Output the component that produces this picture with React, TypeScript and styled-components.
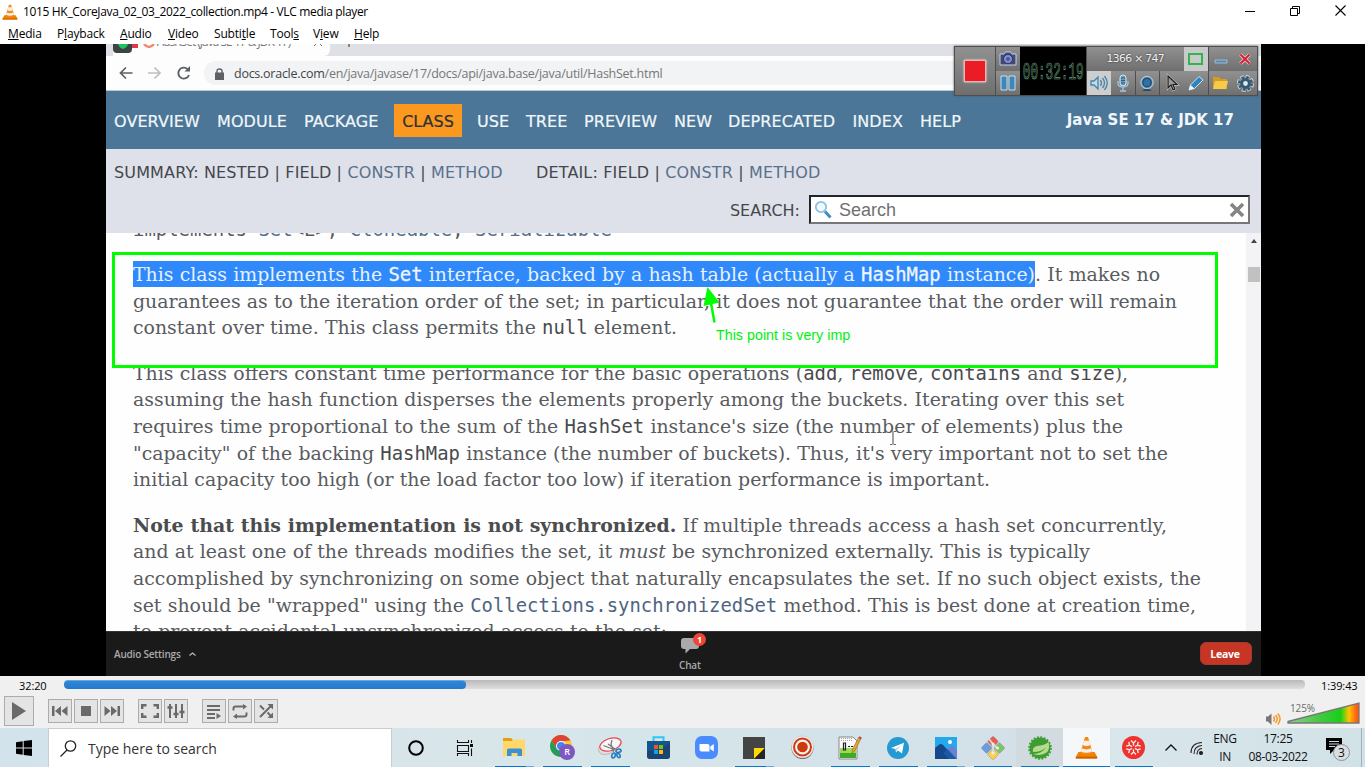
import React from "react";
import styled, { createGlobalStyle } from "styled-components";

const Global = createGlobalStyle`
  * { box-sizing: border-box; }
  html, body { margin: 0; padding: 0; background: #000; overflow: hidden; }
  svg { display: block; flex: none; overflow: visible; }
`;

const ui = `"Open Sans", "Noto Sans", sans-serif`;
const sans = `"DejaVu Sans", sans-serif`;
const serif = `"DejaVu Serif", serif`;
const mono = `"DejaVu Sans Mono", monospace`;

const Screen = styled.div`
  width: 1365px; height: 767px; display: flex; flex-direction: column; overflow: hidden;
  font-family: ${ui}; font-size: 12px; color: #000; background: #fff;
`;

/* ---------- window chrome ---------- */
const TitleBar = styled.header`
  height: 24px; display: flex; align-items: center; padding-left: 2px; background: #fff; flex: none;
`;
const Title = styled.span`
  margin-left: 5px; white-space: nowrap; line-height: 16px; flex: 1; letter-spacing: -0.34px;
`;
const WindowButtons = styled.div`
  display: flex; gap: 35px; padding: 0 19px 3px 0; align-items: center;
`;
const MenuBar = styled.nav`
  height: 20px; display: flex; padding-left: 8px; background: #fff; line-height: 20px; flex: none; letter-spacing: -0.18px;
  u { text-underline-offset: 1px; }
`;
const MenuItem = styled.span<{ $w: number }>`
  width: ${p => p.$w}px; white-space: nowrap;
`;

/* ---------- video ---------- */
const Video = styled.main`
  height: 632px; background: #000; padding: 0 104px 0 106px; flex: none;
`;
const Frame = styled.div`
  position: relative; width: 1155px; height: 632px; display: flex; flex-direction: column; overflow: hidden; background: #fefefe;
`;
const TabStrip = styled.div`
  height: 12px; display: flex; background: #dfe0e6; overflow: hidden; flex: none;
`;
const ActiveTab = styled.div`
  width: 217px; margin-left: 7px; background: #fdfdfe; display: flex; align-items: flex-start; border-bottom-right-radius: 6px;
`;
const SharedBadge = styled.div`
  width: 19px; height: 9px; background: #3d4245; border-radius: 0 0 4px 4px; display: flex; justify-content: center;
`;
const TabTitle = styled.span`
  font: 12px/16px ${ui}; margin: -10px 0 0 2px; color: #777; white-space: nowrap; letter-spacing: -1px; width: 158px;
`;
const RestTabs = styled.div`
  flex: 1; border-radius: 0 0 0 7px; background: #dfe0e6; padding-left: 16px;
`;
const AddressRow = styled.div`
  height: 35px; display: flex; align-items: center; background: #fdfdfe; padding-left: 13px; border-bottom: 1px solid #b8c9d6; flex: none;
`;
const NavIcons = styled.div`
  display: flex; gap: 15px; width: 85px; align-items: center;
`;
const UrlPill = styled.div`
  flex: 1; height: 24px; border-radius: 12px 0 0 12px; background: #f1f3f4; display: flex; align-items: center; padding: 1px 0 0 11px;
  font: 12.5px/20px ${ui}; color: #777; white-space: nowrap;
  b { font-weight: 500; color: #444; }
`;
const Url = styled.span`
  margin-left: 10px; letter-spacing: -0.26px;
`;
const TopNav = styled.div`
  height: 58px; background: #4b7698; display: flex; align-items: center; padding: 3px 0 0 8px; font: 16px/20px ${sans}; color: #f1f6fa; flex: none;
  -webkit-text-stroke: 0.2px #f1f6fa;
`;
const NavItem = styled.span<{ $w: number }>`
  width: ${p => p.$w}px; white-space: nowrap; letter-spacing: 0.08px;
`;
const NavActive = styled.span`
  width: 68px; height: 33px; line-height: 35px; margin-right: 15px; background: #fb981f; color: #2c3036; text-align: center; margin-top: -3px;
  -webkit-text-stroke: 0.2px #2c3036;
`;
const Brand = styled.span`
  font: bold 15px/20px ${sans}; margin: -3px 0 0 auto; padding-right: 27px; white-space: nowrap; -webkit-text-stroke: 0;
`;
const SubNav = styled.div`
  height: 84px; background: #dee1ea; display: flex; flex-direction: column; font: 16px/20px ${sans}; color: #44474b; flex: none;
`;
const SubRow = styled.div`
  display: flex; padding: 14px 0 0 8px; height: 46px; white-space: nowrap; letter-spacing: 0.15px;
`;
const SubGroup = styled.span<{ $w: number }>`
  width: ${p => p.$w}px; a { color: #5a708b; }
`;
const SearchRow = styled.div`
  display: flex; justify-content: flex-end; align-items: center; padding-right: 11px; height: 29px; 
`;
const SearchLabel = styled.span`
  margin: 2px 9px 0 0;
`;
const SearchBox = styled.div`
  width: 441px; height: 29px; background: #fff; border: 2px solid #777; border-top-color: #24242c; border-left-color: #24242c;
  display: flex; align-items: center; padding: 0 3px; font: 18px/24px "Liberation Sans", sans-serif; color: #707070;
  span { flex: 1; margin-left: 7px; }
`;
const Doc = styled.section`
  height: 398px; display: flex; overflow: hidden; background: #fefefe; flex: none;
`;
const DocText = styled.article`
  flex: 1; padding-left: 27px; font: 18.9px/26.6px ${serif}; color: #595b5e; margin-top: -17px;
`;
const Implements = styled.div`
  font: 18.96px/26.6px ${mono}; margin-bottom: 18.5px; white-space: pre; a { color: #566f8c; }
`;
const Para = styled.div`
  margin-bottom: 19px;
`;
const Line = styled.div<{ $w: number }>`
  width: ${p => p.$w}px; height: 26.6px; white-space: nowrap; text-align: justify; text-align-last: justify;
  code { font: 18.9px/20px ${mono}; color: #484a4d; }
  code.link { color: #4f6480; }
  b { color: #4a4c4e; }
`;
const Mark = styled.span`
  background: #2f89fb; color: #e6f1fd; display: inline-block; height: 26px; line-height: 26.6px; width: 902px;
  && code { color: #eef5fe; -webkit-text-stroke: 0.3px #eef5fe; }
`;
const Scrollbar = styled.div`
  width: 15px; background: #f3f2f4; display: flex; flex-direction: column; align-items: center; padding-top: 6px; gap: 24px;
`;
const Thumb = styled.div`
  width: 12px; height: 15px; background: #c1c1c2;
`;
const MeetingBar = styled.footer`
  height: 45px; background: #1a1a1a; border-top: 1px solid #333; display: flex; align-items: center; padding: 0 9px 1px 8px; color: #aaa; flex: none;
`;
const AudioSettings = styled.div`
  width: 565px; display: flex; gap: 8px; align-items: center; font: 600 10px/14px ${ui}; letter-spacing: -0.2px;
`;
const Chat = styled.div`
  position: relative; display: flex; flex-direction: column; gap: 5px; width: 40px; font: 600 10px/12px ${ui}; letter-spacing: -0.2px; padding-top: 2px;
  svg { margin-left: 2px; }
`;
const Badge = styled.span`
  position: absolute; left: 14px; top: -3px; width: 13px; height: 13px; border-radius: 7px; background: #ee4636; color: #fff; font: bold 9px/13px ${ui}; text-align: center;
`;
const Leave = styled.button`
  margin-left: auto; width: 52px; height: 23px; padding: 0 2px 0 0; border: 1px solid #a53a31; border-radius: 6px; background: #c73525; color: #fff; font: bold 10.5px/18px ${ui}; letter-spacing: -0.25px;
`;

/* ---------- recorder overlay ---------- */
const Recorder = styled.div`
  position: absolute; left: 848px; top: 2px; width: 304px; height: 50px; display: grid; background: #4e4e4e; padding: 1px;
  grid-template-columns: 40px 24px 66px repeat(7, 1fr); grid-template-rows: 1fr 1fr; gap: 0.6px; box-shadow: 0 0 2px #555;
`;
const RecCell = styled.div<{ $tone?: string; $col?: string; $row?: string }>`
  background: ${p => p.$tone ?? "linear-gradient(#919191, #6f6f6f)"}; grid-column: ${p => p.$col ?? "auto"}; grid-row: ${p => p.$row ?? "auto"};
  display: flex; align-items: center; justify-content: center; color: #f0f0f0; font: 10.8px/14px ${sans}; letter-spacing: -0.65px; white-space: nowrap; text-shadow: 0 0 2px #222;
  overflow: hidden;
`;
const StopSquare = styled.div`
  width: 22px; height: 22px; background: #ea1c26; border: 1px solid #f6b2b2; box-shadow: 0 0 2px #fff;
`;
const Timer = styled.span`
  font: 23px/24px "Liberation Mono", monospace; letter-spacing: 0; color: #0a120c; -webkit-text-stroke: 0.7px #6ea582; transform: scaleX(0.55); text-shadow: none; padding-top: 3px;
`;

/* ---------- drawn annotations ---------- */
const HighlightBox = styled.div`
  position: absolute; left: 6px; top: 208px; width: 1106px; height: 116px; border: 3px solid #00fd00;
`;
const Arrow = styled.svg`
  position: absolute; left: 594px; top: 242px;
`;
const Note = styled.span`
  position: absolute; left: 610px; top: 282px; font: 14.3px/18px "Liberation Sans", sans-serif; color: #00f010; white-space: nowrap;
`;
const TextCursor = styled.svg`
  position: absolute; left: 783px; top: 386px;
`;

/* ---------- player controls ---------- */
const Controls = styled.section`
  height: 52px; background: #f0f0f0; display: flex; flex-direction: column; flex: none;
`;
const SeekRow = styled.div`
  height: 20px; display: flex; align-items: center; padding: 0 6px 0 19px; font: 11px/14px ${ui};
`;
const Time = styled.span<{ $w: number }>`
  width: ${p => p.$w}px; white-space: nowrap; letter-spacing: -0.1px;
`;
const Track = styled.div`
  flex: 1; height: 9px; border-radius: 4px; background: linear-gradient(#b9b9b9, #dedede); margin: -3px 16px 0 0; overflow: hidden;
`;
const Played = styled.div`
  width: 402px; height: 9px; border-radius: 4px; background: linear-gradient(#2f86d8, #2479cc); border-top: 1px solid #6ba4d8;
`;
const ButtonRow = styled.div`
  display: flex; align-items: center; padding: 0 5px 0 4px; height: 30px; 
`;
const ButtonGroup = styled.div`
  display: flex; gap: 2px; margin-right: 14px;
`;
const PlayerButton = styled.button<{ $big?: boolean }>`
  width: ${p => (p.$big ? 30 : 24)}px; height: ${p => (p.$big ? 30 : 24)}px; padding: 0; border: 1px solid #acacac; background: #e4e4e4;
  display: flex; align-items: center; justify-content: center;
`;
const Volume = styled.div`
  margin-left: auto; display: flex; align-items: flex-end; gap: 6px; position: relative; height: 28px;
`;
const VolumeLabel = styled.span`
  position: absolute; left: 24px; top: 5px; font: 10px/12px ${ui}; color: #6c6c6c; letter-spacing: -0.1px;
`;

/* ---------- taskbar ---------- */
const Taskbar = styled.footer`
  height: 39px; display: flex; background: linear-gradient(90deg, #d3e3ec, #d8e6ea 35%, #d5e6ea 45%, #d3e0e8 75%, #d9e6ec 82%, #d1e2e7); flex: none;
`;
const StartCell = styled.div`
  width: 48px; display: flex; align-items: center; justify-content: center; flex: none;
`;
const TaskSearch = styled.div`
  width: 344px; flex: none; background: #fff; border: 1px solid #c9cdcf; border-bottom: 0; display: flex; align-items: center; padding-left: 11px; gap: 11px;
  font: 14px/20px ${ui}; color: #333; padding-top: 1px;
`;
const TaskApp = styled.div<{ $w?: number; $run?: "one" | "multi"; $active?: boolean; $tint?: string }>`
  width: ${p => p.$w ?? 48}px; flex: none; display: flex; align-items: center; justify-content: center; position: relative;
  background: ${p => (p.$active ? "#f5f8fa" : p.$tint ?? "none")};
  &::after {
    content: ""; position: absolute; bottom: 0; height: 1px; left: ${p => (p.$active ? 0 : 5)}px; right: ${p => (p.$active ? 0 : 4)}px;
    background: ${p => (p.$run === "multi" ? "linear-gradient(90deg, #0078d7 80%, #66a9dd 80%)" : p.$run ? "#0078d7" : "transparent")};
  }
`;
const Tray = styled.div`
  flex: 1; display: flex; align-items: center; padding-left: 8px; font: 12px/18px ${ui}; color: #111;
`;
const WifiSlot = styled.div`
  margin-left: 13px;
`;
const TrayText = styled.div<{ $w: number }>`
  width: ${p => p.$w}px; text-align: center; white-space: nowrap; letter-spacing: -0.35px;
`;
const Notifications = styled.div`
  position: relative; margin-left: 16px; width: 34px; height: 20px;
`;
const NotifCount = styled.span`
  position: absolute; left: 7px; top: 6px; width: 17px; height: 17px; border-radius: 9px; border: 1px solid #8b9296; background: #d9dfe2; font: 12px/15px ${ui}; text-align: center;
`;
const DesktopEdge = styled.div`
  width: 1px; height: 39px; background: #9fb0ba; margin-left: auto; margin-right: 3px;
`;

const Cone = ({ s = 16 }: { s?: number }) => (
  <svg width={s} height={s} viewBox="0 0 20 20">
    <path d="M3 14h14l2.500 4.500q.3 1-.8 1H1.300q-1.100 0-.8-1z" fill="#f08000" />
    <path d="M1 18h18l.3 1.500H.7z" fill="#c86000" />
    <path d="M8.700.8h2.600L15.500 15q-5.500 3-11 0z" fill="#f58a12" />
    <path d="M7.700 4.200h4.600l1.100 3.700q-3.400 1.500-6.800 0zM5.800 10.700q4.200 2 8.400 0l.8 2.700q-5 2.500-10 0z" fill="#f3f1ee" />
  </svg>
);

const g = "#6a6a6a";

const WindowIcons = () => (
  <WindowButtons>
    <svg width="10" height="10"><path d="M0 5.500h10" stroke="#000" /></svg>
    <svg width="10" height="10" fill="none" stroke="#000"><path d="M.5 2.500h7v7h-7zM2.500 2V.5h7v7H8" /></svg>
    <svg width="11" height="11" stroke="#000" strokeWidth="1.100"><path d="M.5 .5l10 10M10.500 .5l-10 10" /></svg>
  </WindowButtons>
);

const Folder = ({ w = 22 }: { w?: number }) => (
  <svg width={w} height={w * 0.82} viewBox="0 0 22 18">
    <path d="M0 0h8l1.500 1.500V5H0z" fill="#e0a010" />
    <path d="M0 3h9l2-1.500h11V18H0z" fill="#ffd76a" />
    <path d="M4 18v-6q0-1.500 1.500-1.500h12Q19 10.500 19 12v6h-4.500v-3h-6v3z" fill="#3a91d4" />
  </svg>
);

const Chrome = () => (
  <svg width="25" height="25" viewBox="0 0 25 25">
    <circle cx="11" cy="11" r="11" fill="#fcc934" />
    <path d="M1.500 5.500A11 11 0 0 1 20.500 5.500L11 6.200 6.500 13.600z" fill="#db4437" />
    <path d="M1.500 5.500A11 11 0 0 0 11 22l4.500-8.500-8.700.300z" fill="#1e9e58" />
    <circle cx="11" cy="11" r="5" fill="#fff" /><circle cx="11" cy="11" r="4" fill="#4285f4" />
    <circle cx="17" cy="17" r="8" fill="#7e57c2" />
    <text x="17" y="20.200" fontSize="9" fontFamily="Open Sans, sans-serif" fontWeight="600" fill="#fff" textAnchor="middle">R</text>
  </svg>
);

const Snip = () => (
  <svg width="24" height="22" viewBox="0 0 24 22" fill="none">
    <path d="M1.500 9q-3 8 5 8.500 5 0 8-3" stroke="#e3a3a5" />
    <ellipse cx="12.500" cy="7.500" rx="11" ry="6" transform="rotate(-18 12.500 7.500)" fill="#f4f6f7" stroke="#e5474c" strokeWidth="1.200" />
    <path d="M5.500 8.500L17 13M14 3l-1 4 2.500 8M10 7l7 5" stroke="#777" strokeWidth="1.200" />
    <g stroke="#2b80bd" strokeWidth="1.700"><ellipse cx="20.500" cy="13.800" rx="2.600" ry="1.600" transform="rotate(-15 20.500 13.800)" /><ellipse cx="15.500" cy="18.500" rx="1.700" ry="2.500" transform="rotate(15 15.500 18.500)" /><ellipse cx="20.500" cy="18.500" rx="1.500" ry="2.200" transform="rotate(-25 20.500 18.500)" /></g>
  </svg>
);

const Store = () => (
  <svg width="23" height="23" viewBox="0 0 23 23">
    <path d="M6.500 6V1.200h10V6" fill="none" stroke="#32c5f4" strokeWidth="2" />
    <path d="M0 5h23v15q0 3-3 3H3q-3 0-3-3z" fill="#14558e" />
    <path d="M0 15q12 0 23-8v13q0 3-3 3H3q-3 0-3-3z" fill="#203d68" opacity=".7" />
    <path d="M7 9h4v4H7z" fill="#f35325" /><path d="M12 9h4v4h-4z" fill="#81bc06" /><path d="M7 14h4v4H7z" fill="#05a6f0" /><path d="M12 14h4v4h-4z" fill="#ffba08" />
  </svg>
);

const ZoomIcon = () => (
  <svg width="23" height="23" viewBox="0 0 23 23">
    <rect width="23" height="23" rx="7" fill="#4a8cff" />
    <path d="M4.500 8h8q2 0 2 2v5.500h-8q-2 0-2-2zM15.300 10.500l3.500-2.500v7.500l-3.500-2.500z" fill="#fff" />
  </svg>
);

const Sticky = () => (
  <svg width="22" height="22"><path d="M0 0h22v22H0z" fill="#444" /><path d="M11 11h11L11 22z" fill="#ffd900" /><path d="M22 11v11H11z" fill="#252525" /></svg>
);

const RecordIcon = () => (
  <svg width="23" height="23" viewBox="0 0 23 23">
    <circle cx="11.500" cy="12" r="11" fill="#6b4a42" />
    <circle cx="11.500" cy="11" r="11" fill="#f7f3f1" stroke="#c9bdb8" strokeWidth=".6" /><circle cx="11.500" cy="11" r="8.500" fill="none" stroke="#c93c16" strokeWidth="2" /><circle cx="11.500" cy="11" r="5.300" fill="#cf3a0d" />
  </svg>
);

const Notepad = () => (
  <svg width="24" height="24" viewBox="0 0 24 24">
    <path d="M1 1h14l4 4v18H1z" fill="#fafafa" stroke="#888" /><path d="M2 12h16v10H2z" fill="#9ada55" /><path d="M2 17h16v5H2z" fill="#3eaa25" />
    <path d="M3 2.500h11M3 4.500h11" stroke="#aaa" strokeDasharray="1 1" />
    <path d="M5.500 7h2v7h-2zM10 10.500h2M13 10.500h2" stroke="#222" strokeWidth="1.200" fill="none" />
    <path d="M14 17l.5-4L21 1l2.200 1.300L17 14.500z" fill="#e7a32c" stroke="#9c671c" strokeWidth=".6" /><path d="M20.500 2l1-1.700 2.200 1.300-1 1.700z" fill="#b54952" />
  </svg>
);

const Telegram = () => (
  <svg width="22" height="22" viewBox="0 0 22 22"><circle cx="11" cy="11" r="11" fill="#2499d2" /><path d="M4 11L17 5.800 15 16.500l-4-3-2 2-.5-3.500z" fill="#fff" /><path d="M8.500 12L14 8.500 9.800 13 9 15.500z" fill="#a9cfe5" /></svg>
);

const Photos = () => (
  <svg width="22" height="22" viewBox="0 0 22 22"><path d="M0 0h22v22H0z" fill="#23a9ec" /><path d="M10 14l6-5q1-.5 2 .5l4 4.500v8H10z" fill="#6f7fcf" /><path d="M0 11l5-4q1.500-.5 3 1l13 14H0z" fill="#15498c" /><path d="M8 16l5-4 9 10H14z" fill="#1d62ad" opacity=".7" /><circle cx="15" cy="5" r="2" fill="#fff" /></svg>
);

const Git = () => (
  <svg width="24" height="24" viewBox="0 0 24 24">
    <g transform="rotate(45 12 12)" stroke="#8a8f93" strokeWidth=".5"><rect x="3.500" y="3.500" width="8" height="8" rx="1.500" fill="#ed5a50" /><rect x="12.500" y="3.500" width="8" height="8" rx="1.500" fill="#7fc45e" /><rect x="3.500" y="12.500" width="8" height="8" rx="1.500" fill="#6a9de0" /><rect x="12.500" y="12.500" width="8" height="8" rx="1.500" fill="#fbd04a" /></g>
    <path d="M8 3l4 5v9M12 8l4 4" stroke="#d7dde0" strokeWidth="1.800" fill="none" /><circle cx="12" cy="8" r="1.600" fill="#e9eef0" /><circle cx="12" cy="17" r="1.600" fill="#e9eef0" /><circle cx="16.500" cy="12" r="1.600" fill="#e9eef0" />
  </svg>
);

const Spring = () => (
  <svg width="24" height="24" viewBox="0 0 24 24">
    <circle cx="12" cy="12" r="10.500" fill="#3f9c35" /><circle cx="12" cy="12" r="10.800" fill="none" stroke="#3f9c35" strokeWidth="2" strokeDasharray="1.900 1.493" />
    <path d="M20.500 6q2 7-2 10.500-5 4-13.500 1.500 9-.5 13-6.500-5 4.500-13 4.500Q4 11 9 10q8-.5 11.500-4z" fill="#b5dc8c" />
  </svg>
);

const RedKnot = () => (
  <svg width="23" height="23" viewBox="0 0 23 23"><circle cx="11.500" cy="11.500" r="11.500" fill="#ee332e" />
    {[0, 60, 120, 180, 240, 300].map(a => <path key={a} transform={`rotate(${a} 11.500 11.500)`} d="M11.500 9.800V7M9 4.500L11.500 7 14 4.500" stroke="#fbe9e6" strokeWidth="1.300" fill="none" />)}
  </svg>
);

export default function App() {
  return (
    <Screen>
      <Global />
      <TitleBar>
        <Cone s={16} />
        <Title>1015 HK_CoreJava_02_03_2022_collection.mp4 - VLC media player</Title>
        <WindowIcons />
      </TitleBar>
      <MenuBar>
        <MenuItem $w={49}><u>M</u>edia</MenuItem>
        <MenuItem $w={63}>P<u>l</u>ayback</MenuItem>
        <MenuItem $w={48}><u>A</u>udio</MenuItem>
        <MenuItem $w={46}><u>V</u>ideo</MenuItem>
        <MenuItem $w={56}>Subti<u>t</u>le</MenuItem>
        <MenuItem $w={43}>Tool<u>s</u></MenuItem>
        <MenuItem $w={41}>V<u>i</u>ew</MenuItem>
        <MenuItem $w={40}><u>H</u>elp</MenuItem>
      </MenuBar>

      <Video>
        <Frame>
          <TabStrip>
            <ActiveTab>
              <SharedBadge><svg width="10" height="6"><path d="M0 0h10q-1 4-5 5-4-1-5-5z" fill="#1ec45c" /></svg></SharedBadge>
              <svg width="22" height="6"><path d="M0 0h6v4H0z" fill="#dc3a44" /><path d="M12 0q5 6 10 0" fill="none" stroke="#f0876a" strokeWidth="2.500" /></svg>
              <TabTitle>HashSet (Java SE 17 &amp; JDK 17)</TabTitle>
              <svg width="8" height="3"><path d="M0 2l2-2M8 2L6 0" stroke="#777" /></svg>
            </ActiveTab>
            <RestTabs><svg width="6" height="4"><path d="M3 0v3" stroke="#666" strokeWidth="1.500" /></svg></RestTabs>
          </TabStrip>
          <AddressRow>
            <NavIcons>
              <svg width="14" height="14" fill="none" stroke="#5c6064" strokeWidth="1.700"><path d="M13.500 7H2M7 1.500L1.500 7 7 12.500" /></svg>
              <svg width="14" height="14" fill="none" stroke="#bdbfc2" strokeWidth="1.700"><path d="M0 7h12M6.500 1.500L12 7l-5.500 5.500" /></svg>
              <svg width="14" height="14" fill="none" stroke="#5c6064" strokeWidth="1.900"><path d="M12 9A5.500 5.500 0 1 1 10.500 3" /><path d="M13 0v5.500H7.500z" fill="#5c6064" stroke="none" /></svg>
            </NavIcons>
            <UrlPill>
              <svg width="9" height="12"><path d="M0 4.500h9V12H0z" fill="#5c6064" /><path d="M2 5V3q0-2 2.500-2T7 3v2" fill="none" stroke="#5c6064" strokeWidth="1.400" /></svg>
              <Url><b>docs.oracle.com</b>/en/java/javase/17/docs/api/java.base/java/util/HashSet.html</Url>
            </UrlPill>
          </AddressRow>
          <TopNav>
            <NavItem $w={103}>OVERVIEW</NavItem>
            <NavItem $w={87}>MODULE</NavItem>
            <NavItem $w={90}>PACKAGE</NavItem>
            <NavActive>CLASS</NavActive>
            <NavItem $w={49}>USE</NavItem>
            <NavItem $w={58}>TREE</NavItem>
            <NavItem $w={90}>PREVIEW</NavItem>
            <NavItem $w={54}>NEW</NavItem>
            <NavItem $w={124.5}>DEPRECATED</NavItem>
            <NavItem $w={67.5}>INDEX</NavItem>
            <NavItem $w={45}>HELP</NavItem>
            <Brand>Java SE 17 &amp; JDK 17</Brand>
          </TopNav>
          <SubNav>
            <SubRow>
              <SubGroup $w={422}>SUMMARY: NESTED | FIELD | <a>CONSTR</a> | <a>METHOD</a></SubGroup>
              <SubGroup $w={300}>DETAIL: FIELD | <a>CONSTR</a> | <a>METHOD</a></SubGroup>
            </SubRow>
            <SearchRow>
              <SearchLabel>SEARCH:</SearchLabel>
              <SearchBox>
                <svg width="18" height="19" fill="none"><circle cx="7" cy="7" r="5.200" stroke="#8ac2de" strokeWidth="1.800" fill="#eef8fd" /><path d="M11 11.500l5.500 6" stroke="#3c8fc0" strokeWidth="3" /></svg>
                <span>Search</span>
                <svg width="16" height="16"><path d="M2 2l12 12M14 2L2 14" stroke="#858585" strokeWidth="3.600" /></svg>
              </SearchBox>
            </SearchRow>
          </SubNav>
          <Doc>
            <DocText>
              <Implements>implements <a>Set</a>&lt;E&gt;, <a>Cloneable</a>, <a>Serializable</a></Implements>
              <Para>
                <Line $w={1027}><Mark>This class implements the <code>Set</code> interface, backed by a hash table (actually a <code>HashMap</code> instance)</Mark>. It makes no</Line>
                <Line $w={1044}>guarantees as to the iteration order of the set; in particular, it does not guarantee that the order will remain</Line>
                <Line $w={544}>constant over time. This class permits the <code>null</code> element.</Line>
              </Para>
              <Para>
                <Line $w={995}>This class offers constant time performance for the basic operations (<code>add</code>, <code>remove</code>, <code>contains</code> and <code>size</code>),</Line>
                <Line $w={991}>assuming the hash function disperses the elements properly among the buckets. Iterating over this set</Line>
                <Line $w={990}>requires time proportional to the sum of the <code>HashSet</code> instance's size (the number of elements) plus the</Line>
                <Line $w={1035}>"capacity" of the backing <code>HashMap</code> instance (the number of buckets). Thus, it's very important not to set the</Line>
                <Line $w={857}>initial capacity too high (or the load factor too low) if iteration performance is important.</Line>
              </Para>
              <Para>
                <Line $w={1034}><b>Note that this implementation is not synchronized.</b> If multiple threads access a hash set concurrently,</Line>
                <Line $w={957}>and at least one of the threads modifies the set, it <i>must</i> be synchronized externally. This is typically</Line>
                <Line $w={1068}>accomplished by synchronizing on some object that naturally encapsulates the set. If no such object exists, the</Line>
                <Line $w={1063}>set should be "wrapped" using the <code className="link">Collections.synchronizedSet</code> method. This is best done at creation time,</Line>
                <Line $w={534}>to prevent accidental unsynchronized access to the set:</Line>
              </Para>
            </DocText>
            <Scrollbar>
              <svg width="6" height="4"><path d="M0 4l3-4 3 4z" fill="#444" /></svg>
              <Thumb />
            </Scrollbar>
          </Doc>
          <MeetingBar>
            <AudioSettings>Audio Settings <svg width="7" height="4"><path d="M.5 3.500L3.500 1l3 2.500" stroke="#bbb" fill="none" strokeWidth="1.200" /></svg></AudioSettings>
            <Chat>
              <svg width="18" height="16"><path d="M3 0h12q3 0 3 3v5q0 3-3 3H9l-4.500 4.500V11H3Q0 11 0 8V3q0-3 3-3z" fill="#aaa" /></svg>
              Chat
              <Badge>1</Badge>
            </Chat>
            <Leave>Leave</Leave>
          </MeetingBar>

          <Recorder>
            <RecCell $row="1 / 3" $col="1"><StopSquare /></RecCell>
            <RecCell $row="1" $col="2"><svg width="18" height="15"><path d="M1 3h4l1.500-2h5L13 3h4v11H1z" fill="#424b78" stroke="#c8cce0" /><circle cx="9" cy="8" r="4.500" fill="#8793c8" stroke="#2c3566" /><circle cx="9" cy="8" r="2" fill="#4656a4" /></svg></RecCell>
            <RecCell $row="2" $col="2"><svg width="16" height="16"><path d="M1 1h6v14H1zM9 1h6v14H9z" fill="#3c88be" stroke="#c9dce8" /></svg></RecCell>
            <RecCell $row="1 / 3" $col="3" $tone="#000"><Timer>00:32:19</Timer></RecCell>
            <RecCell $row="1" $col="4 / 8">1366 × 747</RecCell>
            <RecCell $row="1" $col="8" $tone="#c9cbca"><svg width="16" height="12"><path d="M1 1h13v10H1z" fill="none" stroke="#32b551" strokeWidth="2" /></svg></RecCell>
            <RecCell $row="1" $col="9"><svg width="14" height="12"><path d="M1 7h12v3H1z" fill="#4a8dbb" stroke="#c0d4e0" strokeWidth=".7" /></svg></RecCell>
            <RecCell $row="1" $col="10"><svg width="12" height="12"><path d="M1.500 1.500l9 9M10.500 1.500l-9 9" stroke="#f1c9c9" strokeWidth="3.500" /><path d="M1.500 1.500l9 9M10.500 1.500l-9 9" stroke="#cf2436" strokeWidth="2" /></svg></RecCell>
            <RecCell $row="2" $col="4" $tone="#cdcfcf"><svg width="18" height="16" fill="none" stroke="#4583aa" strokeWidth="1.300"><path d="M1 6h3l4-4v12l-4-4H1z" fill="#c4dae8" /><path d="M10.500 5q2 3 0 6M12.500 3q4 5 0 10M14.500 1q5.500 7 0 14" /></svg></RecCell>
            <RecCell $row="2" $col="5"><svg width="14" height="18" fill="none"><rect x="4" y="1" width="6" height="11" rx="3" fill="#6c9aba" stroke="#d3e5f0" /><path d="M5 4h4M5 6.500h4M5 9h4" stroke="#2d5f84" /><path d="M2 7v2q0 4 5 4t5-4V7M7 13v4M4 17h6" stroke="#a6c6da" strokeWidth="1.300" /></svg></RecCell>
            <RecCell $row="2" $col="6"><svg width="16" height="17"><path d="M3 16q5-5 10 0z" fill="#284967" /><circle cx="8" cy="7.500" r="6.200" fill="#6f9dbc" stroke="#c9dae6" strokeWidth=".8" /><circle cx="8" cy="7.500" r="4.200" fill="#2f72a4" stroke="#1f4f75" strokeWidth="1.400" /></svg></RecCell>
            <RecCell $row="2" $col="7"><svg width="12" height="16"><path d="M2 1v12l3-3 2 5 2-1-2-4.500h4z" fill="#9a9a9a" stroke="#ddd" strokeWidth="2.200" /><path d="M2 1v12l3-3 2 5 2-1-2-4.500h4z" fill="#9a9a9a" stroke="#1c1c1c" strokeWidth="1.200" /></svg></RecCell>
            <RecCell $row="2" $col="8"><svg width="18" height="17"><path d="M2 15l1.500-5L12 1.500 16 5 7.500 13.500z" fill="#2a87bd" stroke="#d0e5f2" /><path d="M2 15l1.500-5L7.500 13.500z" fill="#edf4f8" /></svg></RecCell>
            <RecCell $row="2" $col="9"><svg width="17" height="14"><path d="M1 1h6l1.500 2H15v10H1z" fill="#d69b20" /><path d="M3 5h13l-2 8H1z" fill="#f7ca48" /></svg></RecCell>
            <RecCell $row="2" $col="10"><svg width="17" height="17"><circle cx="8.500" cy="8.500" r="6.600" fill="none" stroke="#cbd9e2" strokeWidth="4" strokeDasharray="3.400 1.784" /><circle cx="8.500" cy="8.500" r="6.200" fill="none" stroke="#365a73" strokeWidth="2.800" strokeDasharray="2.500 2.370" /><circle cx="8.500" cy="8.500" r="3.900" fill="#dfeaf1" stroke="#365a73" strokeWidth="3" /></svg></RecCell>
          </Recorder>

          <HighlightBox />
          <Arrow width="24" height="40"><path d="M7.500 1l12 15.500L3.500 20z" fill="#00fd00" /><path d="M11 17l3.500 19.500" stroke="#00fd00" strokeWidth="2.500" /></Arrow>
          <Note>This point is very imp</Note>
          <TextCursor width="8" height="16"><path d="M1 1.500h2.500M4.500 1.500H7M4 2v12M1 14.500h2.500M4.500 14.500H7" stroke="#666" strokeWidth="1.200" /></TextCursor>
        </Frame>
      </Video>

      <Controls>
        <SeekRow>
          <Time $w={45}>32:20</Time>
          <Track><Played /></Track>
          <Time $w={38}>1:39:43</Time>
        </SeekRow>
        <ButtonRow>
          <ButtonGroup><PlayerButton $big><svg width="16" height="18"><path d="M1 0l14 9-14 9z" fill={g} /></svg></PlayerButton></ButtonGroup>
          <ButtonGroup>
            <PlayerButton><svg width="16" height="12" fill={g}><path d="M0 1h2.500v10H0zM9 1v10L3 6zM15.500 1v10l-6-5z" /></svg></PlayerButton>
            <PlayerButton><svg width="10" height="10"><path d="M0 0h10v10H0z" fill={g} /></svg></PlayerButton>
            <PlayerButton><svg width="16" height="12" fill={g}><path d="M13.500 1H16v10h-2.500zM7 1v10l6-5zM.5 1v10l6-5z" /></svg></PlayerButton>
          </ButtonGroup>
          <ButtonGroup>
            <PlayerButton><svg width="18" height="14" fill="none" stroke={g} strokeWidth="2.400"><path d="M5.500 1.200H1.200V5M12.500 1.200h4.300V5M1.200 9v3.800h4.300M16.800 9v3.800h-4.300" /></svg></PlayerButton>
            <PlayerButton><svg width="18" height="14" stroke={g} strokeWidth="2"><path d="M3 0v14M9 0v14M15 0v14" /><path d="M.5 3.500h5M6.500 10h5M12.500 8h5" strokeWidth="2.400" /></svg></PlayerButton>
          </ButtonGroup>
          <ButtonGroup>
            <PlayerButton><svg width="16" height="15" fill="none" stroke={g} strokeWidth="2"><path d="M1 2h13M1 6h13M1 10h8M1 14h8" /><path d="M10.500 9l4.500 3-4.500 3z" fill={g} stroke="none" /></svg></PlayerButton>
            <PlayerButton><svg width="16" height="15" fill="none" stroke={g} strokeWidth="2"><path d="M1.500 6.500v-2q0-2 2-2H12M14.500 8.500v2q0 2-2 2H4" /><path d="M11 0l4 2.500L11 5.500zM5 9.500l-4 3L5 15z" fill={g} stroke="none" /></svg></PlayerButton>
            <PlayerButton><svg width="14" height="14" fill="none" stroke={g} strokeWidth="2"><path d="M1 13L12 2M1 1.500l4 4M8.500 8.500L12 12" /><path d="M8.500 0H14v5.500zM14 8.500V14H8.500z" fill={g} stroke="none" /></svg></PlayerButton>
          </ButtonGroup>
          <Volume>
            <svg width="15" height="12"><path d="M0 3.500h2l3.500-3V12L2 8.500H0z" fill="#777" /><path d="M7.500 3.500q2 2.500 0 5M9.500 2q3.500 4 0 8M11.800 .5q4.500 5.500 0 11" fill="none" stroke="#f7941e" strokeWidth="1.400" /></svg>
            <svg width="73" height="22">
              <defs><linearGradient id="vol"><stop offset="0" stopColor="#8fcf8f" /><stop offset=".45" stopColor="#42c942" /><stop offset=".74" stopColor="#18d018" /><stop offset=".86" stopColor="#ffc400" /><stop offset=".97" stopColor="#ff5a12" /></linearGradient></defs>
              <path d="M1 18.500L72 0v20H1z" fill="url(#vol)" stroke="#777" strokeWidth="1.300" />
            </svg>
            <VolumeLabel>125%</VolumeLabel>
          </Volume>
        </ButtonRow>
      </Controls>

      <Taskbar>
        <StartCell><svg width="16" height="16"><path d="M0 2.200l6.700-1v6.300H0zM7.700 1L16 0v7.500H7.700zM0 8.500h6.700v6.300l-6.700-1zM7.700 8.500H16V16l-8.300-1z" fill="#000" /></svg></StartCell>
        <TaskSearch>
          <svg width="17" height="17" fill="none" stroke="#222" strokeWidth="1.300"><circle cx="10.500" cy="6" r="5.200" /><path d="M7 10l-6.500 6.500" /></svg>
          Type here to search
        </TaskSearch>
        <TaskApp><svg width="16" height="16"><circle cx="8" cy="8" r="6.800" fill="none" stroke="#000" strokeWidth="2" /></svg></TaskApp>
        <TaskApp $w={50}><svg width="17" height="16" fill="none" stroke="#111" strokeWidth="1.100"><path d="M.5 0v2.500h11V0M.5 5.500h11v6H.5zM.5 16v-2.500h11V16M14.500 0v3M14.500 8.500V16" /><path d="M13 4h3v3h-3z" fill="#111" stroke="none" /></svg></TaskApp>
        <TaskApp $run="multi"><Folder /></TaskApp>
        <TaskApp $run="one"><Chrome /></TaskApp>
        <TaskApp $run="one"><Snip /></TaskApp>
        <TaskApp><Store /></TaskApp>
        <TaskApp><ZoomIcon /></TaskApp>
        <TaskApp $run="multi"><Sticky /></TaskApp>
        <TaskApp><RecordIcon /></TaskApp>
        <TaskApp $run="one"><Notepad /></TaskApp>
        <TaskApp $run="one"><Telegram /></TaskApp>
        <TaskApp $w={47} $run="multi"><Photos /></TaskApp>
        <TaskApp $w={47} $run="one"><Git /></TaskApp>
        <TaskApp $w={47} $run="one" $tint="rgba(205,210,210,.4)"><Spring /></TaskApp>
        <TaskApp $w={47} $run="one" $active><Cone s={23} /></TaskApp>
        <TaskApp $w={47} $run="one"><RedKnot /></TaskApp>
        <Tray>
          <svg width="12" height="7"><path d="M.5 6.500L6 1l5.500 5.500" fill="none" stroke="#111" strokeWidth="1.300" /></svg>
          <WifiSlot><svg width="14" height="14" fill="none" stroke="#222" strokeWidth="1.100"><path d="M1 12Q1 2 12 1.500M4 13Q4 5 12 4.500M7 13.500Q7 8 12 7.500" /><circle cx="11" cy="12" r="1.500" fill="#222" /></svg></WifiSlot>
          <TrayText $w={42}>ENG<br />IN</TrayText>
          <TrayText $w={64}>17:25<br />08-03-2022</TrayText>
          <Notifications>
            <svg width="16" height="16"><path d="M0 0h16v12H8l-4 4v-4H0z" fill="#000" /><path d="M3 3.500h10M3 6h10M3 8.500h6" stroke="#cbd8de" /></svg>
            <NotifCount>3</NotifCount>
          </Notifications>
          <DesktopEdge />
        </Tray>
      </Taskbar>
    </Screen>
  );
}
